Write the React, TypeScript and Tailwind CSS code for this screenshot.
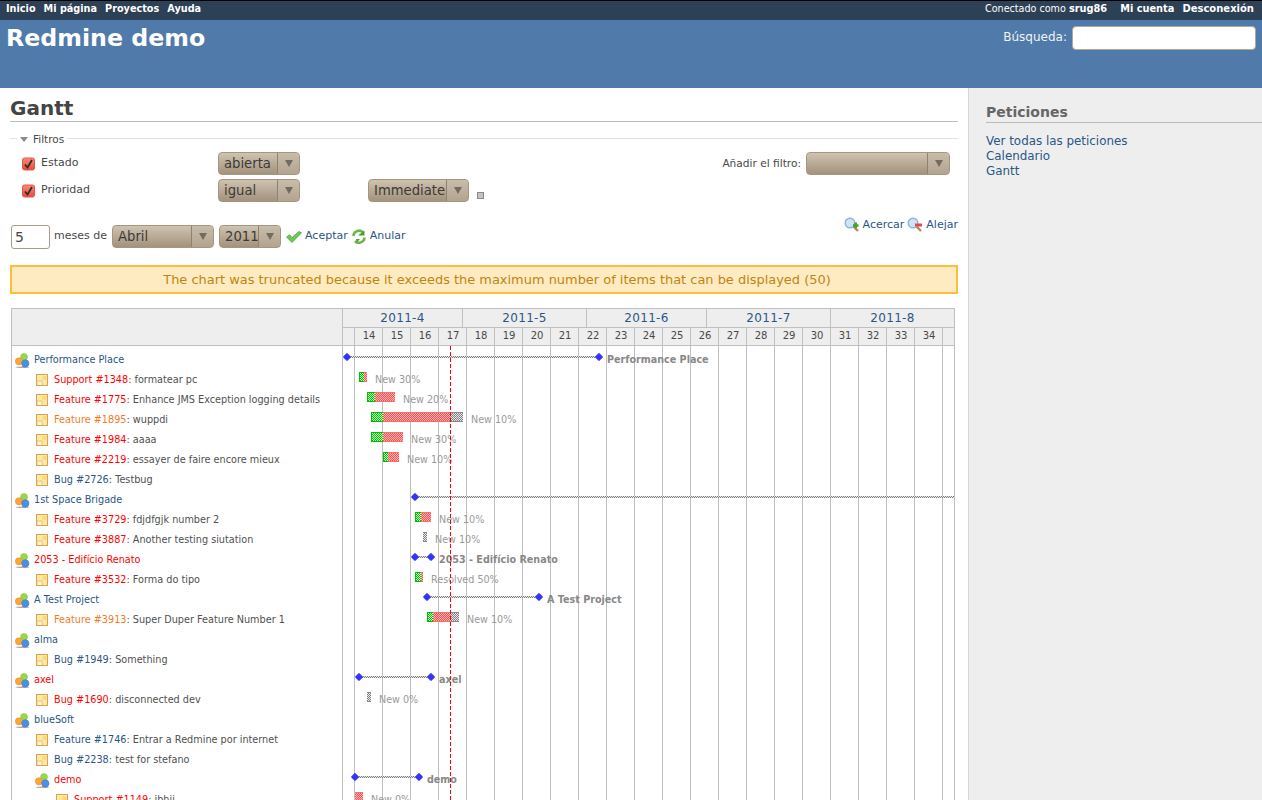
import React, { useId } from 'react';

const font = 'font-["DejaVu_Sans",sans-serif]';

type Row = {
  kind: 'project' | 'task';
  indent?: number;
  tracker?: string;
  tone?: 'red' | 'orange';
  name: string;
  // project span, in page px
  from?: number;
  to?: number;
  open?: boolean;
  // task bar: start, end of done, end of late, end
  bar?: [number, number, number, number];
  note?: string;
  noteX?: number;
};

const rows: Row[] = [
  { kind: 'project', name: 'Performance Place', from: 347, to: 599, note: 'Performance Place', noteX: 607 },
  { kind: 'task', tracker: 'Support #1348', tone: 'red', name: 'formatear pc', bar: [359, 364, 367, 367], note: 'New 30%', noteX: 375 },
  { kind: 'task', tracker: 'Feature #1775', tone: 'red', name: 'Enhance JMS Exception logging details', bar: [367, 375, 395, 395], note: 'New 20%', noteX: 403 },
  { kind: 'task', tracker: 'Feature #1895', tone: 'orange', name: 'wuppdi', bar: [371, 383, 451, 463], note: 'New 10%', noteX: 471 },
  { kind: 'task', tracker: 'Feature #1984', tone: 'red', name: 'aaaa', bar: [371, 383, 403, 403], note: 'New 30%', noteX: 411 },
  { kind: 'task', tracker: 'Feature #2219', tone: 'red', name: 'essayer de faire encore mieux', bar: [383, 388, 399, 399], note: 'New 10%', noteX: 407 },
  { kind: 'task', tracker: 'Bug #2726', name: 'Testbug' },
  { kind: 'project', name: '1st Space Brigade', from: 415, open: true },
  { kind: 'task', tracker: 'Feature #3729', tone: 'red', name: 'fdjdfgjk number 2', bar: [415, 421, 431, 431], note: 'New 10%', noteX: 439 },
  { kind: 'task', tracker: 'Feature #3887', tone: 'red', name: 'Another testing siutation', bar: [423, 423, 423, 427], note: 'New 10%', noteX: 435 },
  { kind: 'project', tone: 'red', name: '2053 - Edifício Renato', from: 415, to: 431, note: '2053 - Edifício Renato', noteX: 439 },
  { kind: 'task', tracker: 'Feature #3532', tone: 'red', name: 'Forma do tipo', bar: [415, 421, 423, 423], note: 'Resolved 50%', noteX: 431 },
  { kind: 'project', name: 'A Test Project', from: 427, to: 539, note: 'A Test Project', noteX: 547 },
  { kind: 'task', tracker: 'Feature #3913', tone: 'orange', name: 'Super Duper Feature Number 1', bar: [427, 433, 451, 459], note: 'New 10%', noteX: 467 },
  { kind: 'project', name: 'alma' },
  { kind: 'task', tracker: 'Bug #1949', name: 'Something' },
  { kind: 'project', tone: 'red', name: 'axel', from: 359, to: 431, note: 'axel', noteX: 439 },
  { kind: 'task', tracker: 'Bug #1690', tone: 'red', name: 'disconnected dev', bar: [367, 367, 367, 371], note: 'New 0%', noteX: 379 },
  { kind: 'project', name: 'blueSoft' },
  { kind: 'task', tracker: 'Feature #1746', name: 'Entrar a Redmine por internet' },
  { kind: 'task', tracker: 'Bug #2238', name: 'test for stefano' },
  { kind: 'project', indent: 20, tone: 'red', name: 'demo', from: 355, to: 419, note: 'demo', noteX: 427 },
  { kind: 'task', indent: 20, tracker: 'Support #1149', tone: 'red', name: 'ibhji', bar: [355, 355, 363, 363], note: 'New 0%', noteX: 371 },
];

const months = [
  { label: '2011-4', w: 120 },
  { label: '2011-5', w: 124 },
  { label: '2011-6', w: 120 },
  { label: '2011-7', w: 124 },
  { label: '2011-8', w: 124 },
];

const weeks = [14, 15, 16, 17, 18, 19, 20, 21, 22, 23, 24, 25, 26, 27, 28, 29, 30, 31, 32, 33, 34];

// chart origin: the inner left edge of the right hand panel
const chartX = 343;

const toneClass = (tone?: 'red' | 'orange') =>
  tone === 'red' ? 'text-[#ff0000]' : tone === 'orange' ? 'text-[#f57a1f]' : 'text-[#2a5685]';

// 1px dither fill, as the old gantt images had it
const Dither = ({ w, h, dark, light, edge }: { w: number; h: number; dark: string; light: string; edge?: string }) => {
  const id = useId();
  return (
    <svg width={w} height={h} className="block shrink-0" shapeRendering="crispEdges">
      <defs>
        <pattern id={id} width="2" height="2" patternUnits="userSpaceOnUse">
          <rect width="2" height="2" fill={light} />
          <rect width="1" height="1" fill={dark} />
          <rect x="1" y="1" width="1" height="1" fill={dark} />
        </pattern>
      </defs>
      <rect width={w} height={h} fill={`url(#${id})`} />
      {edge && (
        <>
          <rect width={w} height="1" fill={edge} />
          <rect y={h - 1} width={w} height="1" fill={edge} />
        </>
      )}
    </svg>
  );
};

const ProjectIcon = () => (
  <svg width="16" height="16" viewBox="0 0 16 16" className="shrink-0">
    <ellipse cx="7.5" cy="15.2" rx="7" ry="0.8" fill="#a9a9a9" />
    <circle cx="9" cy="5" r="3.5" fill="#9ad648" stroke="#7fc036" strokeWidth="0.5" />
    <circle cx="3.9" cy="9.3" r="3.6" fill="#f9a63a" stroke="#ea8f20" strokeWidth="0.5" />
    <circle cx="10.3" cy="11.4" r="3.7" fill="#4d8ee6" stroke="#3a74c6" strokeWidth="0.5" />
  </svg>
);

const TaskIcon = () => (
  <svg width="14" height="14" viewBox="0 0 14 14" className="shrink-0 mt-[2px]">
    <rect x="0.5" y="0.5" width="11" height="11" fill="#fde9a2" stroke="#e0a050" />
    <path d="M1 11 V7 H6 V11" fill="#fff6d2" stroke="#e8b468" strokeWidth="0.8" />
    <rect x="6.5" y="2" width="4" height="4" fill="#fbd878" />
  </svg>
);

const CheckedBox = () => (
  <svg width="13" height="14" viewBox="0 0 13 14" className="shrink-0">
    <defs>
      <linearGradient id="cb" x1="0" y1="0" x2="0" y2="1">
        <stop offset="0" stopColor="#f98a78" />
        <stop offset="1" stopColor="#ea4a3c" />
      </linearGradient>
    </defs>
    <rect x="0.5" y="1" width="12" height="12" rx="2" fill="url(#cb)" stroke="#e2574b" />
    <path d="M3 7.5 L5.5 10.5 L10 3" fill="none" stroke="#2a2a2a" strokeWidth="1.7" />
  </svg>
);

const TickIcon = () => (
  <svg width="16" height="12" viewBox="0 0 16 12" className="shrink-0 mt-[6px] ml-[1px] -mr-[1px]">
    <path d="M0.5 6 L3.5 3.8 L6 6.5 L13 0.5 L15.5 1.8 L6 11.5 Z" fill="#6ccb55" stroke="#3c9a2c" strokeWidth="0.7" />
  </svg>
);

const ReloadIcon = () => (
  <svg width="14" height="15" viewBox="0 0 14 15" className="shrink-0 mt-[4px]" fill="none">
    <path d="M1.5 7 A5.5 5.5 0 0 1 11.5 4" stroke="#6cb548" strokeWidth="2.6" />
    <path d="M12.5 8.5 A5.5 5.5 0 0 1 3 12" stroke="#6cb548" strokeWidth="2.6" />
    <path d="M6 6.5 H12.5 L12.5 1.5 Z" fill="#4f9a35" />
    <path d="M5 13 L8 10 H4 Z" fill="#4f9a35" />
  </svg>
);

const ZoomIcon = ({ minus }: { minus?: boolean }) => (
  <svg width="16" height="16" viewBox="0 0 16 16" className="shrink-0">
    <path d="M9.5 9.5 L14 14" stroke="#b88a4a" strokeWidth="2.4" />
    <circle cx="6" cy="6" r="4.8" fill="#cfe3f5" stroke="#8fb3d4" strokeWidth="1.4" />
    {minus ? (
      <rect x="8" y="6.5" width="7" height="3" fill="#e5484d" />
    ) : (
      <path d="M9 8.5 H14.5 M11.7 5.5 V11" stroke="#46a32f" strokeWidth="2.6" />
    )}
  </svg>
);

const Select = ({ value, w, arrowW = 22 }: { value?: string; w: number; arrowW?: number }) => (
  <div
    className="h-[23px] flex rounded-[4px] border border-[#a39780] bg-gradient-to-b from-[#cfc3b1] to-[#a3927c] text-[13.2px] text-[#3c3a36]"
    style={{ width: w }}
  >
    <div className="flex-1 min-w-0 pl-[5px] leading-[21px] whitespace-nowrap">{value}</div>
    <div
      className="border-l border-[#8f8370] flex items-center justify-center rounded-r-[3px] bg-gradient-to-b from-[#c8bcaa] to-[#b3a490]"
      style={{ width: arrowW }}
    >
      <div className="w-0 h-0 border-l-[4px] border-r-[4px] border-t-[7px] border-l-transparent border-r-transparent border-t-[#716b60]" />
    </div>
  </div>
);

const Diamond = ({ x, y }: { x: number; y: number }) => (
  <div
    className="absolute w-[6px] h-[6px] rotate-45 rounded-[1px] bg-[#3434ff]"
    style={{ left: x - chartX - 3, top: y }}
  />
);

const GanttLeft = () => (
  <div className="w-[331px] shrink-0 border-l border-[#c0c0c0]">
    <div className="h-[38px] mb-[4px] bg-[#eeeeee] border-t border-b border-[#c0c0c0]" />
    {rows.map((r) => (
      <div
        key={r.tracker ?? r.name}
        className="h-5 flex items-center text-[9.7px] text-[#505050] whitespace-nowrap"
        style={{ paddingLeft: (r.kind === 'project' ? 3 : 24) + (r.indent ?? 0) }}
      >
        {r.kind === 'project' ? <ProjectIcon /> : <TaskIcon />}
        <span className={r.kind === 'project' ? 'ml-[3px]' : 'ml-[4px]'}>
          {r.kind === 'project' ? (
            <span className={toneClass(r.tone)}>{r.name}</span>
          ) : (
            <>
              <span className={toneClass(r.tone)}>{r.tracker}</span>: {r.name}
            </>
          )}
        </span>
      </div>
    ))}
  </div>
);

const GanttChart = () => (
  <div className="relative w-[613px] shrink-0 h-[520px] overflow-hidden border-l border-[#c0c0c0]">
    {/* Month row */}
    <div className="flex h-[20px] bg-[#eeeeee] border-t border-b border-[#c0c0c0]">
      {months.map((m) => (
        <div
          key={m.label}
          className="border-r border-[#c0c0c0] text-center text-[12px] leading-[18px] text-[#2a5685] tracking-[0.3px]"
          style={{ width: m.w }}
        >
          {m.label}
        </div>
      ))}
    </div>
    {/* Week row */}
    <div className="flex h-[18px] bg-[#eeeeee] border-b border-[#c0c0c0]">
      <div className="w-3 shrink-0 border-r border-[#c0c0c0]" />
      {weeks.map((w) => (
        <div key={w} className="w-7 shrink-0 pl-[1px] border-r border-[#c0c0c0] text-center text-[10px] leading-[16px] text-[#484848]">
          {w}
        </div>
      ))}
      <div className="w-3 shrink-0 border-r border-[#c0c0c0]" />
    </div>
    {/* Grid lines */}
    <div className="absolute left-0 right-0 top-[38px] bottom-0 flex">
      <div className="w-3 shrink-0 border-r border-[#c0c0c0]" />
      {weeks.map((w) => (
        <div key={w} className="w-7 shrink-0 border-r border-[#c0c0c0]" />
      ))}
      <div className="w-3 shrink-0 border-r border-[#c0c0c0]" />
    </div>
    {/* Rows */}
    <div className="absolute left-0 top-[38px] w-full">
      {rows.map((r, i) => {
        const y = i * 20;
        return (
          <React.Fragment key={r.tracker ?? r.name}>
            {r.from !== undefined && (
              <>
                <div className="absolute" style={{ left: r.from - chartX, top: y + 10 }}>
                  <Dither
                    w={(r.open ? 611 + chartX : (r.to as number)) - r.from}
                    h={2}
                    dark="#808080"
                    light="#e4e4e4"
                  />
                </div>
                <Diamond x={r.from} y={y + 8} />
                {r.to !== undefined && <Diamond x={r.to} y={y + 8} />}
              </>
            )}
            {r.bar && (
              <div className="absolute flex" style={{ left: r.bar[0] - chartX, top: y + 6 }}>
                {r.bar[1] > r.bar[0] && (
                  <div className="border-l border-[#00c000]">
                    <Dither w={r.bar[1] - r.bar[0] - 1} h={10} dark="#00c800" light="#c8ffc8" edge="#00c000" />
                  </div>
                )}
                {r.bar[2] > r.bar[1] && <Dither w={r.bar[2] - r.bar[1]} h={10} dark="#ff5050" light="#ffb4b4" edge="#ff6a6a" />}
                {r.bar[3] > r.bar[2] && <Dither w={r.bar[3] - r.bar[2]} h={10} dark="#808080" light="#e8e8e8" edge="#8a8a8a" />}
              </div>
            )}
            {r.note && (
              <div
                className={`absolute h-5 leading-5 text-[9.6px] whitespace-nowrap ${
                  r.kind === 'project' ? 'font-bold text-[#888888]' : 'text-[#999999]'
                }`}
                style={{ left: (r.noteX as number) - chartX, top: y + 4 }}
              >
                {r.note}
              </div>
            )}
          </React.Fragment>
        );
      })}
    </div>
    {/* Today */}
    <div className="absolute left-[107px] top-[38px] bottom-0 w-px bg-[repeating-linear-gradient(to_bottom,#ff0000_0_4px,transparent_4px_6px)]" />
  </div>
);

export default function App() {
  return (
    <div className={`h-screen overflow-hidden bg-white text-[#484848] ${font}`}>
      {/* Top menu */}
      <div className="h-5 bg-[#2c4056] border-t border-black flex justify-between items-center pl-[6px] pr-[8px] pb-[3px] text-[10px] text-white">
        <div className="flex gap-[8px] font-bold text-[9.7px]">
          <span>Inicio</span>
          <span>Mi página</span>
          <span>Proyectos</span>
          <span>Ayuda</span>
        </div>
        <div className="flex items-baseline">
          <span className="text-[9.6px] mr-[13px]">
            Conectado como <b className="text-[9.8px]">srug86</b>
          </span>
          <div className="flex items-baseline gap-[8px] font-bold">
            <span className="text-[9.8px]">Mi cuenta</span>
            <span>Desconexión</span>
          </div>
        </div>
      </div>

      {/* Header */}
      <header className="h-[68px] bg-[#507aaa] text-white flex justify-between pl-[6px] pr-[6px]">
        <h1 className="text-[23.7px] font-bold leading-[37px]">Redmine demo</h1>
        <div className="flex items-start pt-[6px] gap-[5px] text-[12px] text-[#f2f2f2]">
          <span className="leading-[23px]">Búsqueda:</span>
          <div className="w-[184px] h-[24px] bg-white rounded-[4px] border border-[#b3a78f]" />
        </div>
      </header>

      <div className="flex h-[712px]">
        {/* Main content */}
        <main className="w-[968px] shrink-0 pl-[10px] pr-[10px] pt-[8px]">
          <h2 className="text-[20px] font-bold text-[#444444] leading-[24px] pb-[1px] border-b border-[#bbbbbb]">
            Gantt
          </h2>

          {/* Filters */}
          <div className="relative mt-[16px] border-t border-[#e2e2e2] h-[76px]">
            <div className="absolute -top-[7px] left-[7px] bg-white px-[3px] flex items-center gap-[5px] text-[10.5px] leading-[14px]">
              <div className="w-0 h-0 border-l-[4px] border-r-[4px] border-t-[5px] border-l-transparent border-r-transparent border-t-[#8a8a8a]" />
              Filtros
            </div>
            <div className="flex pt-[13px]">
              <div className="w-[208px] pl-[12px] flex flex-col gap-[4px]">
                <div className="h-[23px] flex items-center gap-[6px] text-[11px]"><CheckedBox />Estado</div>
                <div className="h-[23px] flex items-center gap-[6px] text-[11px]"><CheckedBox />Prioridad</div>
              </div>
              <div className="w-[150px] flex flex-col gap-[4px]">
                <Select value="abierta" w={82} />
                <Select value="igual" w={82} />
              </div>
              <div className="flex items-end gap-[8px]">
                <Select value="Immediate" w={101} />
                <div className="w-[7px] h-[7px] mb-[3px] bg-[#c4c4c4] border border-[#8a8a8a]" />
              </div>
              <div className="flex-1 flex justify-end pr-[8px]">
                <div className="flex items-center h-[23px] gap-[5px] text-[10.6px]">
                  Añadir el filtro:
                  <Select w={144} />
                </div>
              </div>
            </div>
          </div>

          {/* Months form */}
          <div className="flex justify-between mt-[-2px]">
            <div className="flex items-start pl-[1px] pt-[13px] gap-[4px] text-[11px]">
              <div className="w-[39px] h-[24px] rounded-[3px] border border-[#a89c88] text-[14px] leading-[22px] pl-[3px]">5</div>
              <span className="w-[54px] leading-[21px]">meses de</span>
              <Select value="Abril" w={102} />
              <div className="ml-[1px]">
                <Select value="2011" w={62} />
              </div>
              <TickIcon />
              <span className="leading-[21px] text-[#2a5685]">Aceptar</span>
              <ReloadIcon />
              <span className="leading-[21px] text-[#2a5685]">Anular</span>
            </div>
            <div className="flex items-center h-[16px] mt-[5px] gap-[3px] text-[11px] text-[#2a5685]">
              <ZoomIcon />
              <span>Acercar</span>
              <ZoomIcon minus />
              <span>Alejar</span>
            </div>
          </div>

          {/* Warning */}
          <div className="mt-[16px] h-[29px] pl-[26px] bg-[#ffebc1] border-2 border-[#fdbf3b] text-center text-[12.95px] leading-[25px] text-[#c1850f]">
            The chart was truncated because it exceeds the maximum number of items that can be displayed (50)
          </div>

          {/* Gantt */}
          <div className="flex mt-[14px] ml-[1px]">
            <GanttLeft />
            <GanttChart />
          </div>
        </main>

        {/* Sidebar */}
        <aside className="flex-1 bg-[#eeeeee] border-l border-[#d7d7d7] pl-[17px] pt-[15px]">
          <h3 className="text-[14px] font-bold text-[#666666] leading-[18px] pb-[1px] border-b border-[#bbbbbb]">
            Peticiones
          </h3>
          <div className="mt-[11px] text-[11.9px] leading-[15px] text-[#2a5685]">
            <div>Ver todas las peticiones</div>
            <div>Calendario</div>
            <div>Gantt</div>
          </div>
        </aside>
      </div>
    </div>
  );
}
